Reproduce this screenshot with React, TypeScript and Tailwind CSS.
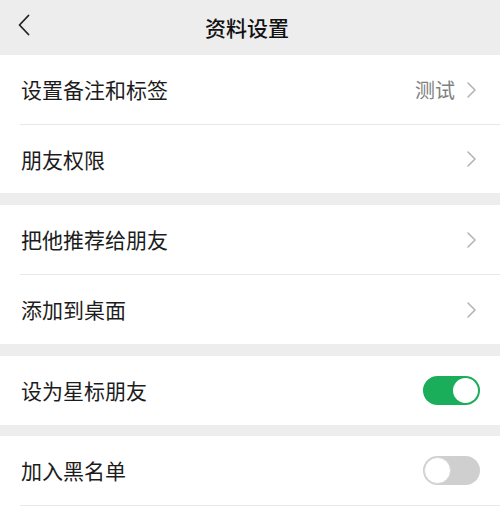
import type { ReactNode } from "react";

const font = { fontFamily: '"Noto Sans CJK SC", "Noto Sans", sans-serif' };

function Chevron() {
  return (
    <svg width="14" height="16" viewBox="0 0 14 16" className="ml-[8px] mr-[2px]">
      <path d="M4 1 L11 8 L4 15" fill="none" stroke="#b5b5b5" strokeWidth="1.6" strokeLinecap="round" strokeLinejoin="round" />
    </svg>
  );
}

function Toggle({ on }: { on: boolean }) {
  return (
    <div className={`relative w-[57px] h-[29px] rounded-full ${on ? "bg-[#1aad5a]" : "bg-[#cfcfcf]"}`}>
      <div
        className={`absolute w-[25px] h-[25px] rounded-full bg-white ${
          on ? "top-[2px] right-[2px]" : "top-[1px] left-[1px] w-[27px] h-[27px] border border-[#d6d6d6]"
        }`}
      />
    </div>
  );
}

function Row({ label, h = "h-[69px]", right }: { label: string; h?: string; right: ReactNode }) {
  return (
    <div className={`${h} bg-white flex items-center justify-between pl-[21px] pr-[20px]`}>
      <span className="text-[21px] text-[#1c1c1c] leading-none">{label}</span>
      <div className="flex items-center">{right}</div>
    </div>
  );
}

const Line = () => (
  <div className="bg-white pl-[20px]">
    <div className="h-px bg-[#e8e8e8]" />
  </div>
);

const Gap = ({ h = "h-[12px]" }: { h?: string }) => <div className={`${h} bg-[#ededed]`} />;

export default function App() {
  return (
    <div className="w-[500px] h-[528px] bg-white overflow-hidden" style={font}>
      <div className="h-[55px] bg-[#ededed] relative flex items-center justify-center pr-[6px]">
        <svg width="14" height="22" viewBox="0 0 14 22" className="absolute left-[17px] top-[14px]">
          <path d="M11.5 1.5 L2.5 11 L11.5 20.5" fill="none" stroke="#222" strokeWidth="1.8" strokeLinecap="round" strokeLinejoin="round" />
        </svg>
        <span className="text-[21px] font-medium text-[#111] leading-none">资料设置</span>
      </div>
      <Row label="设置备注和标签" right={<><span className="text-[20px] text-[#808080] leading-none mr-[1px]">测试</span><Chevron /></>} />
      <Line />
      <Row label="朋友权限" h="h-[68px]" right={<Chevron />} />
      <Gap />
      <Row label="把他推荐给朋友" right={<Chevron />} />
      <Line />
      <Row label="添加到桌面" right={<Chevron />} />
      <Gap />
      <Row label="设为星标朋友" right={<Toggle on />} />
      <Gap h="h-[11px]" />
      <Row label="加入黑名单" right={<Toggle on={false} />} />
      <Line />
    </div>
  );
}
